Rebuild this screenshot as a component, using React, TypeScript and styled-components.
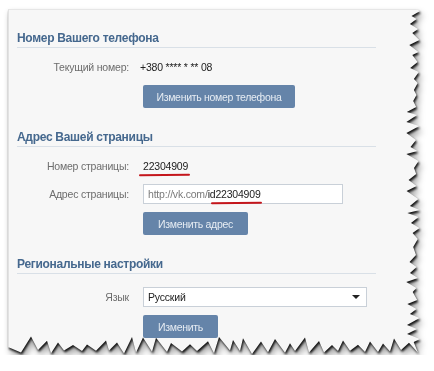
import styled, { createGlobalStyle } from 'styled-components';

const GlobalStyle = createGlobalStyle`
    html, body {
        margin: 0;
        padding: 0;
        background: #fff;
    }
    body {
        font-family: "Liberation Sans", Arial, sans-serif;
    }
`;

// torn paper outline for the card (right and bottom edges)
const CARD_W = 414;
const CARD_H = 346;

function tornOutline(): string {
    let seed = 11;
    const rnd = () => {
        seed = (seed * 16807) % 2147483647;
        return seed / 2147483647;
    };
    const pts: string[] = ['0px 0px', `${CARD_W - 6}px 0px`];

    let y = 2;
    let out = true;
    while (y < CARD_H - 12) {
        const x = out ? CARD_W - 2 - rnd() * 4 : CARD_W - 8 - rnd() * 8;
        pts.push(`${x.toFixed(1)}px ${y}px`);
        y += 3 + Math.round(rnd() * 5);
        out = !out;
    }

    let x = CARD_W - 4;
    let up = false;
    while (x > 4) {
        const yy = up ? CARD_H - 9 - rnd() * 10 : CARD_H - 1 - rnd() * 4;
        pts.push(`${x}px ${yy.toFixed(1)}px`);
        x -= 3 + Math.round(rnd() * 8);
        up = !up;
    }
    pts.push(`0px ${CARD_H - 8}px`);
    return `polygon(${pts.join(', ')})`;
}

const OUTLINE = tornOutline();

const Page = styled.div`
    padding: 9px 0 0 8px;
`;

const Shadow = styled.div`
    width: ${CARD_W}px;
    filter: drop-shadow(1px 2px 1px rgba(0, 0, 0, 0.9)) drop-shadow(2px 4px 3px rgba(0, 0, 0, 0.35));
`;

const Card = styled.div`
    box-sizing: border-box;
    width: ${CARD_W}px;
    height: ${CARD_H}px;
    padding: 20px 0 0 8px;
    background: #f7f7f7;
    border-left: 1px solid #e2e2e2;
    border-top: 1px solid #e6e6e6;
    clip-path: ${OUTLINE};
`;

const Section = styled.section`
    width: 359px;

    & + & {
        margin-top: 21px;
    }
`;

const Heading = styled.h2`
    margin: 0;
    padding-bottom: 1px;
    border-bottom: 1px solid #d9e0e7;
    font-size: 12px;
    letter-spacing: -0.3px;
    line-height: 16px;
    font-weight: bold;
    color: #45688e;
`;

const Fields = styled.div<{ $spaced?: boolean }>`
    display: flex;
    flex-direction: column;
    gap: 8px;
    margin-top: ${p => (p.$spaced ? 13 : 9)}px;
`;

const Row = styled.div`
    display: grid;
    grid-template-columns: 112px 1fr;
    column-gap: 14px;
    align-items: center;
    min-height: 20px;
    font-size: 10.5px;
    letter-spacing: -0.2px;
`;

const Label = styled.div`
    text-align: right;
    color: #6d6d6d;
`;

const Value = styled.div<{ $shift?: number }>`
    color: #222;
    margin-left: ${p => p.$shift ?? 0}px;
`;

const Marked = styled.span`
    position: relative;

    &::after {
        content: '';
        position: absolute;
        left: -4px;
        right: -2px;
        bottom: -4px;
        height: 2px;
        border-radius: 2px;
        background: #c4161c;
        transform: rotate(-0.6deg);
    }
`;

const TextBox = styled.div<{ $width: number }>`
    box-sizing: border-box;
    width: ${p => p.$width}px;
    height: 20px;
    display: flex;
    align-items: center;
    justify-content: space-between;
    padding: 0 6px 0 4px;
    background: #fff;
    border: 1px solid #c9d0d8;
    color: #222;

    .muted {
        color: #7a7a7a;
    }
`;

const Arrow = styled.span`
    width: 0;
    height: 0;
    border-left: 4px solid transparent;
    border-right: 4px solid transparent;
    border-top: 4px solid #222;
`;

const Button = styled.button<{ $width: number }>`
    grid-column: 2;
    box-sizing: border-box;
    width: ${p => p.$width}px;
    height: 23px;
    padding: 0;
    border: none;
    border-radius: 2px;
    background: #6584a9;
    color: #e6ecf3;
    font-family: inherit;
    font-size: 10.5px;
    letter-spacing: -0.3px;
    text-align: center;
`;

export default function App() {
    return (
        <Page>
            <GlobalStyle />
            <Shadow>
                <Card>
                    <Section>
                        <Heading>Номер Вашего телефона</Heading>
                        <Fields>
                            <Row>
                                <Label>Текущий номер:</Label>
                                <Value $shift={-3}>+380 **** * ** 08</Value>
                            </Row>
                            <Row>
                                <Button $width={152}>Изменить номер телефона</Button>
                            </Row>
                        </Fields>
                    </Section>

                    <Section>
                        <Heading>Адрес Вашей страницы</Heading>
                        <Fields>
                            <Row>
                                <Label>Номер страницы:</Label>
                                <Value><Marked>22304909</Marked></Value>
                            </Row>
                            <Row>
                                <Label>Адрес страницы:</Label>
                                <TextBox $width={200}>
                                    <span>
                                        <span className="muted">http://vk.com/</span>id<Marked>22304909</Marked>
                                    </span>
                                </TextBox>
                            </Row>
                            <Row>
                                <Button $width={105}>Изменить адрес</Button>
                            </Row>
                        </Fields>
                    </Section>

                    <Section>
                        <Heading>Региональные настройки</Heading>
                        <Fields $spaced>
                            <Row>
                                <Label>Язык</Label>
                                <TextBox $width={224}>
                                    <span>Русский</span>
                                    <Arrow />
                                </TextBox>
                            </Row>
                            <Row>
                                <Button $width={75}>Изменить</Button>
                            </Row>
                        </Fields>
                    </Section>
                </Card>
            </Shadow>
        </Page>
    );
}
